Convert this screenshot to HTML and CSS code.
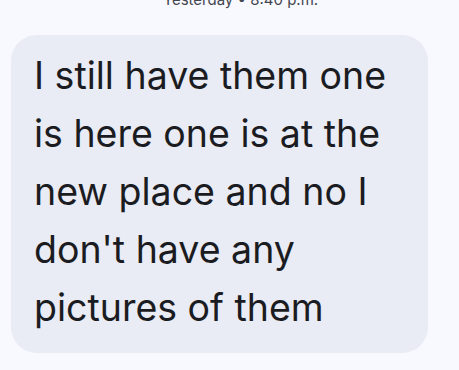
FILE: index.html
```html
<!DOCTYPE html>
<html lang="en">
<head>
  <meta charset="UTF-8" />
  <meta name="viewport" content="width=device-width, initial-scale=1.0"/>
  <title>Messages</title>
  <link rel="stylesheet" href="styles.css">
</head>
<body>

<div class="thread">
  <div class="stamp">Yesterday • 8:40 p.m.</div>
  <div class="bubble">
    I still have them one is here one is at the new place and no I don't have any pictures of them
  </div>
</div>

</body>
</html>
```

FILE: styles.css
```css
* { box-sizing: border-box; margin: 0; padding: 0; }
body {
  background-color: #f8f9fe;
  font-family: Inter, "Noto Sans", sans-serif;
  color: #1b1c21;
  overflow: hidden;
}
.thread {
  display: flex;
  flex-direction: column;
  align-items: flex-start;
  margin-top: -10px;
  padding: 0 11px;
}
.stamp {
  align-self: center;
  margin-left: 22px;
  font-size: 15px;
  line-height: 20px;
  color: #44464f;
  margin-bottom: 25px;
}
.bubble {
  background-color: #e9ebf5;
  border-radius: 26px;
  width: 417px;
  padding: 12px 23px 16px;
  font-size: 37.5px;
  line-height: 58px;
}
```
